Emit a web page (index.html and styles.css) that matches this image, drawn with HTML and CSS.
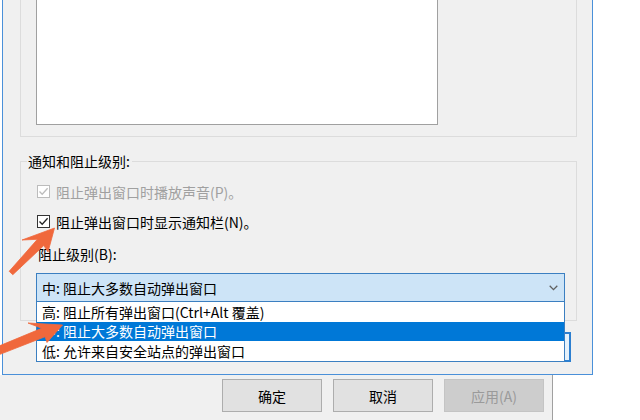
FILE: index.html
```html
<!DOCTYPE html>
<html lang="zh-CN">
<head>
<meta charset="utf-8">
<title>弹出窗口阻止程序设置</title>
<link rel="stylesheet" href="styles.css">
</head>
<body>
<div class="front">
  <div class="group1"><div class="textbox"></div></div>
  <div class="group2">
    <div class="legend">通知和阻止级别:</div>
    <div class="check disabled">
      <span class="box"><svg width="11" height="11" viewBox="0 0 11 11"><path d="M1.5 5.5 L4.2 8.3 L9.6 2.2" fill="none" stroke="#bdbdbd" stroke-width="1.3"/></svg></span>
      <span>阻止弹出窗口时播放声音(P)。</span>
    </div>
    <div class="check">
      <span class="box"><svg width="11" height="11" viewBox="0 0 11 11"><path d="M1.5 5.5 L4.2 8.3 L9.6 2.2" fill="none" stroke="#222" stroke-width="1.3"/></svg></span>
      <span>阻止弹出窗口时显示通知栏(N)。</span>
    </div>
    <div class="lbl">阻止级别(B):</div>
    <div class="combo">
      <span>中: 阻止大多数自动弹出窗口</span>
      <svg class="chev" width="9" height="6" viewBox="0 0 9 6"><path d="M0.7 0.8 L4.5 4.6 L8.3 0.8" fill="none" stroke="#606060" stroke-width="1.3"/></svg>
    </div>
  </div>
  <div class="btnrow"><div class="closebtn"></div></div>
</div>
<div class="back">
  <div class="btn">确定</div>
  <div class="btn">取消</div>
  <div class="btn off">应用(A)</div>
</div>
<ul class="droplist">
  <li class="i1">高: 阻止所有弹出窗口(Ctrl+Alt 覆盖)</li>
  <li class="i2 sel">中: 阻止大多数自动弹出窗口</li>
  <li class="i3">低: 允许来自安全站点的弹出窗口</li>
</ul>
<svg class="arrows" width="640" height="420" viewBox="0 0 640 420">
  <polygon fill="#f0683c" stroke="#f0683c" stroke-width="0.8" stroke-linejoin="round" points="9.2,271.3 12.8,274.7 43.8,245.5 48,252 54.5,228 22,240 37.4,239.3"/>
  <polygon fill="#f0683c" stroke="#f0683c" stroke-width="0.8" stroke-linejoin="round" points="-6.5,348.3 -3.5,355.7 45.1,336.7 47,342.5 62.5,325 28,323 41.7,328.3"/>
</svg>
</body>
</html>
```

FILE: styles.css
```css
html, body {
  margin: 0;
  padding: 0;
}
body {
  width: 640px;
  height: 420px;
  overflow: hidden;
  position: relative;
  background: #ffffff;
  font-family: "Noto Sans CJK SC", "Noto Sans", sans-serif;
  font-size: 14px;
  color: #000;
}
.front {
  margin-left: 2px;
  width: 591px;
  height: 375px;
  box-sizing: border-box;
  border: 1px solid #4a90d9;
  border-top: none;
  background: #f0f0f0;
}
.group1 {
  margin-left: 17px;
  width: 557px;
  height: 137px;
  box-sizing: border-box;
  border: 1px solid #dcdcdc;
  border-top: none;
}
.textbox {
  margin-left: 15px;
  width: 402px;
  height: 125px;
  box-sizing: border-box;
  background: #fff;
  border: 1px solid #a0a0a0;
  border-top: none;
}
.group2 {
  margin: 24px 0 0 17px;
  width: 557px;
  height: 160px;
  box-sizing: border-box;
  border: 1px solid #dcdcdc;
}
.legend {
  display: table;
  margin: -10px 0 0 6px;
  padding: 0 2px 0 1px;
  line-height: 19px;
  background: #f0f0f0;
}
.check {
  display: flex;
  align-items: center;
  gap: 6px;
  height: 19px;
  margin: 11px 0 0 16px;
  white-space: nowrap;
}
.check .box {
  width: 13px;
  height: 13px;
  box-sizing: border-box;
  border: 1px solid #333;
  background: #fff;
  display: flex;
  align-items: center;
  justify-content: center;
}
.check.disabled {
  color: #a0a0a0;
}
.check.disabled .box {
  border-color: #bcbcbc;
}
.lbl {
  margin: 14px 0 0 17px;
  line-height: 19px;
}
.combo {
  margin: 9px 0 0 15px;
  width: 529px;
  height: 29px;
  box-sizing: border-box;
  border: 1px solid #3b7fc1;
  background: #cde4f7;
  display: flex;
  align-items: center;
  justify-content: space-between;
  padding: 0 6px 0 5px;
  white-space: nowrap;
}
.btnrow {
  display: flex;
  justify-content: flex-end;
  margin-top: 11px;
  padding-right: 21px;
}
.closebtn {
  width: 100px;
  height: 30px;
  box-sizing: border-box;
  border: 2px solid #2c7fd0;
  background: #e5f1fb;
}
.back {
  width: 553px;
  height: 45px;
  box-sizing: border-box;
  background: #f0f0f0;
  border-right: 1px solid #a0a0a0;
  display: flex;
  justify-content: flex-end;
  gap: 11px;
  padding: 4px 8px 0 0;
}
.btn {
  width: 100px;
  height: 33px;
  box-sizing: border-box;
  background: #e1e1e1;
  border: 1px solid #adadad;
  display: flex;
  align-items: center;
  justify-content: center;
}
.btn.off {
  background: #cdcdcd;
  border-color: #c4c4c4;
  color: #9a9a9a;
}
.droplist {
  position: absolute;
  left: 36px;
  top: 302px;
  width: 529px;
  margin: 0;
  padding: 0;
  list-style: none;
  box-sizing: border-box;
  border: 1px solid #3b7fc1;
  border-top: none;
  background: #fff;
}
.droplist li {
  padding-left: 5px;
  white-space: nowrap;
}
.droplist .i1 { height: 20px; line-height: 20px; }
.droplist .i2 { height: 19px; line-height: 19px; }
.droplist .i3 { height: 20px; line-height: 20px; }
.droplist .sel {
  background: #0078d7;
  color: #fff;
}
.arrows {
  position: absolute;
  left: 0;
  top: 0;
  pointer-events: none;
}
```
